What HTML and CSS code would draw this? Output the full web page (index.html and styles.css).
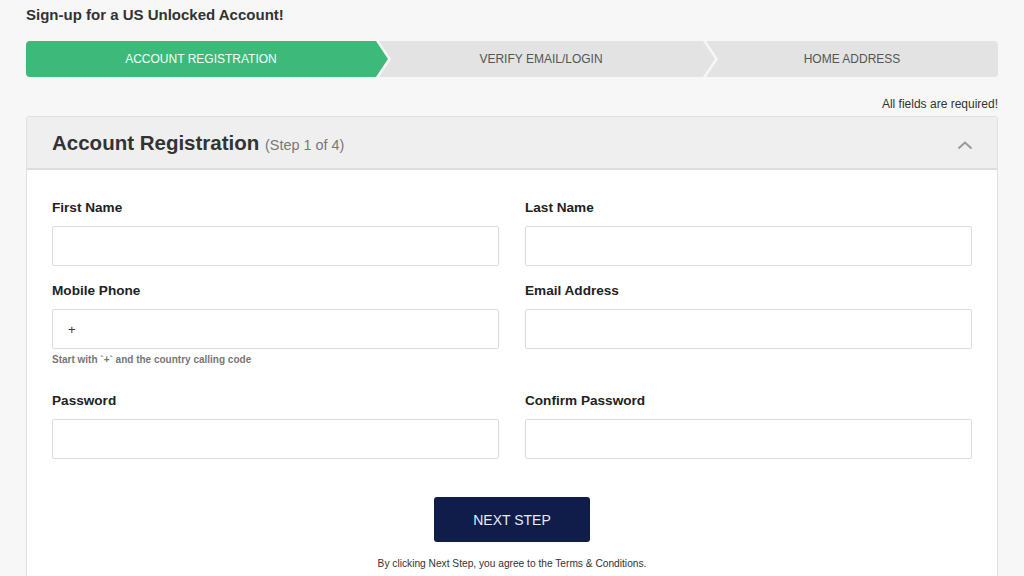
FILE: index.html
```html
<!DOCTYPE html>
<html lang="en">
<head>
<meta charset="utf-8">
<title>Sign-up</title>
<link rel="stylesheet" href="styles.css">
</head>
<body>
<div class="page">
  <h1 class="page-title">Sign-up for a US Unlocked Account!</h1>
  <div class="stepper">
    <div class="step step-first step-active">ACCOUNT REGISTRATION</div>
    <div class="step step-mid">VERIFY EMAIL/LOGIN</div>
    <div class="step step-last">HOME ADDRESS</div>
  </div>
  <p class="required">All fields are required!</p>
  <div class="panel">
    <div class="panel-head">
      <h2 class="panel-title">Account Registration <span class="panel-sub">(Step 1 of 4)</span></h2>
      <svg class="chevron" width="16" height="10" viewBox="0 0 16 10"><path d="M1.5 8.5 L8 2.5 L14.5 8.5" fill="none" stroke="#999" stroke-width="2"/></svg>
    </div>
    <div class="panel-body">
      <div class="grid">
        <div class="field">
          <label class="label">First Name</label>
          <div class="input"></div>
        </div>
        <div class="field">
          <label class="label">Last Name</label>
          <div class="input"></div>
        </div>
        <div class="field">
          <label class="label">Mobile Phone</label>
          <div class="input"><span class="plus">+</span></div>
          <div class="hint">Start with `+` and the country calling code</div>
        </div>
        <div class="field">
          <label class="label">Email Address</label>
          <div class="input"></div>
        </div>
        <div class="field">
          <label class="label">Password</label>
          <div class="input"></div>
        </div>
        <div class="field">
          <label class="label">Confirm Password</label>
          <div class="input"></div>
        </div>
      </div>
      <div class="actions">
        <button class="btn">NEXT STEP</button>
        <p class="terms">By clicking Next Step, you agree to the Terms &amp; Conditions.</p>
      </div>
    </div>
  </div>
</div>
</body>
</html>
```

FILE: styles.css
```css
* { box-sizing: border-box; }
html, body { margin: 0; padding: 0; }
body {
  background: #f7f7f7;
  font-family: "Liberation Sans", Arial, sans-serif;
  color: #333;
  height: 576px;
  overflow: hidden;
}
.page { padding: 5px 26px 0 26px; }
.page-title {
  margin: 0;
  font-size: 15px;
  line-height: 20px;
  font-weight: bold;
  color: #333;
}
.stepper {
  margin-top: 16px;
  display: flex;
  height: 36px;
  border-radius: 4px;
  overflow: hidden;
}
.step {
  height: 36px;
  display: flex;
  align-items: center;
  justify-content: center;
  font-size: 12px;
  color: #555;
  background: #e3e3e3;
}
.step-first {
  flex: none;
  width: 362px;
  padding-right: 12px;
  clip-path: polygon(0 0, 350px 0, 362px 18px, 350px 36px, 0 36px);
}
.step-active { background: #3dba79; color: #f4fff8; }
.step-mid {
  flex: none;
  width: 336px;
  margin-left: -9px;
  padding-right: 12px;
  clip-path: polygon(0 0, 324px 0, 336px 18px, 324px 36px, 0 36px, 12px 18px);
}
.step-last {
  flex: 1;
  margin-left: -9px;
  clip-path: polygon(0 0, 100% 0, 100% 100%, 0 36px, 12px 18px);
}
.required {
  margin: 19px 0 0 0;
  text-align: right;
  font-size: 12px;
  line-height: 16px;
  color: #333;
}
.panel {
  margin-top: 4px;
  border: 1px solid #e0e0e0;
  border-radius: 3px;
  background: #fff;
}
.panel-head {
  height: 53px;
  background: #efefef;
  border-bottom: 2px solid #dedede;
  display: flex;
  align-items: center;
  justify-content: space-between;
  padding: 0 24px 0 25px;
}
.panel-title {
  margin: 0;
  font-size: 20.5px;
  font-weight: bold;
  color: #333;
}
.panel-sub {
  font-size: 14.4px;
  font-weight: normal;
  color: #777;
}
.chevron { margin-top: 4px; }
.panel-body { padding: 28px 25px 40px 25px; }
.grid {
  display: grid;
  grid-template-columns: 1fr 1fr;
  column-gap: 26px;
  row-gap: 15px;
}
.field { display: flex; flex-direction: column; }
.label {
  font-size: 13.6px;
  line-height: 20px;
  font-weight: bold;
  color: #222;
}
.input {
  margin-top: 8px;
  height: 40px;
  border: 1px solid #dcdcdc;
  border-radius: 2px;
  background: #fff;
  display: flex;
  align-items: center;
  padding-left: 15px;
}
.plus { font-size: 13px; color: #6b2020; }
.hint {
  margin: 3px 0 8px 0;
  font-size: 10px;
  line-height: 16px;
  font-weight: bold;
  color: #777;
}
.actions {
  margin-top: 38px;
  display: flex;
  flex-direction: column;
  align-items: center;
}
.btn {
  width: 156px;
  height: 45px;
  border: none;
  border-radius: 3px;
  background: #101c4a;
  color: #e6ebf7;
  font-family: "Liberation Sans", Arial, sans-serif;
  font-size: 14px;
  padding: 0;
}
.terms {
  margin: 14px 0 0 0;
  font-size: 10.2px;
  line-height: 16px;
  color: #333;
}
```
